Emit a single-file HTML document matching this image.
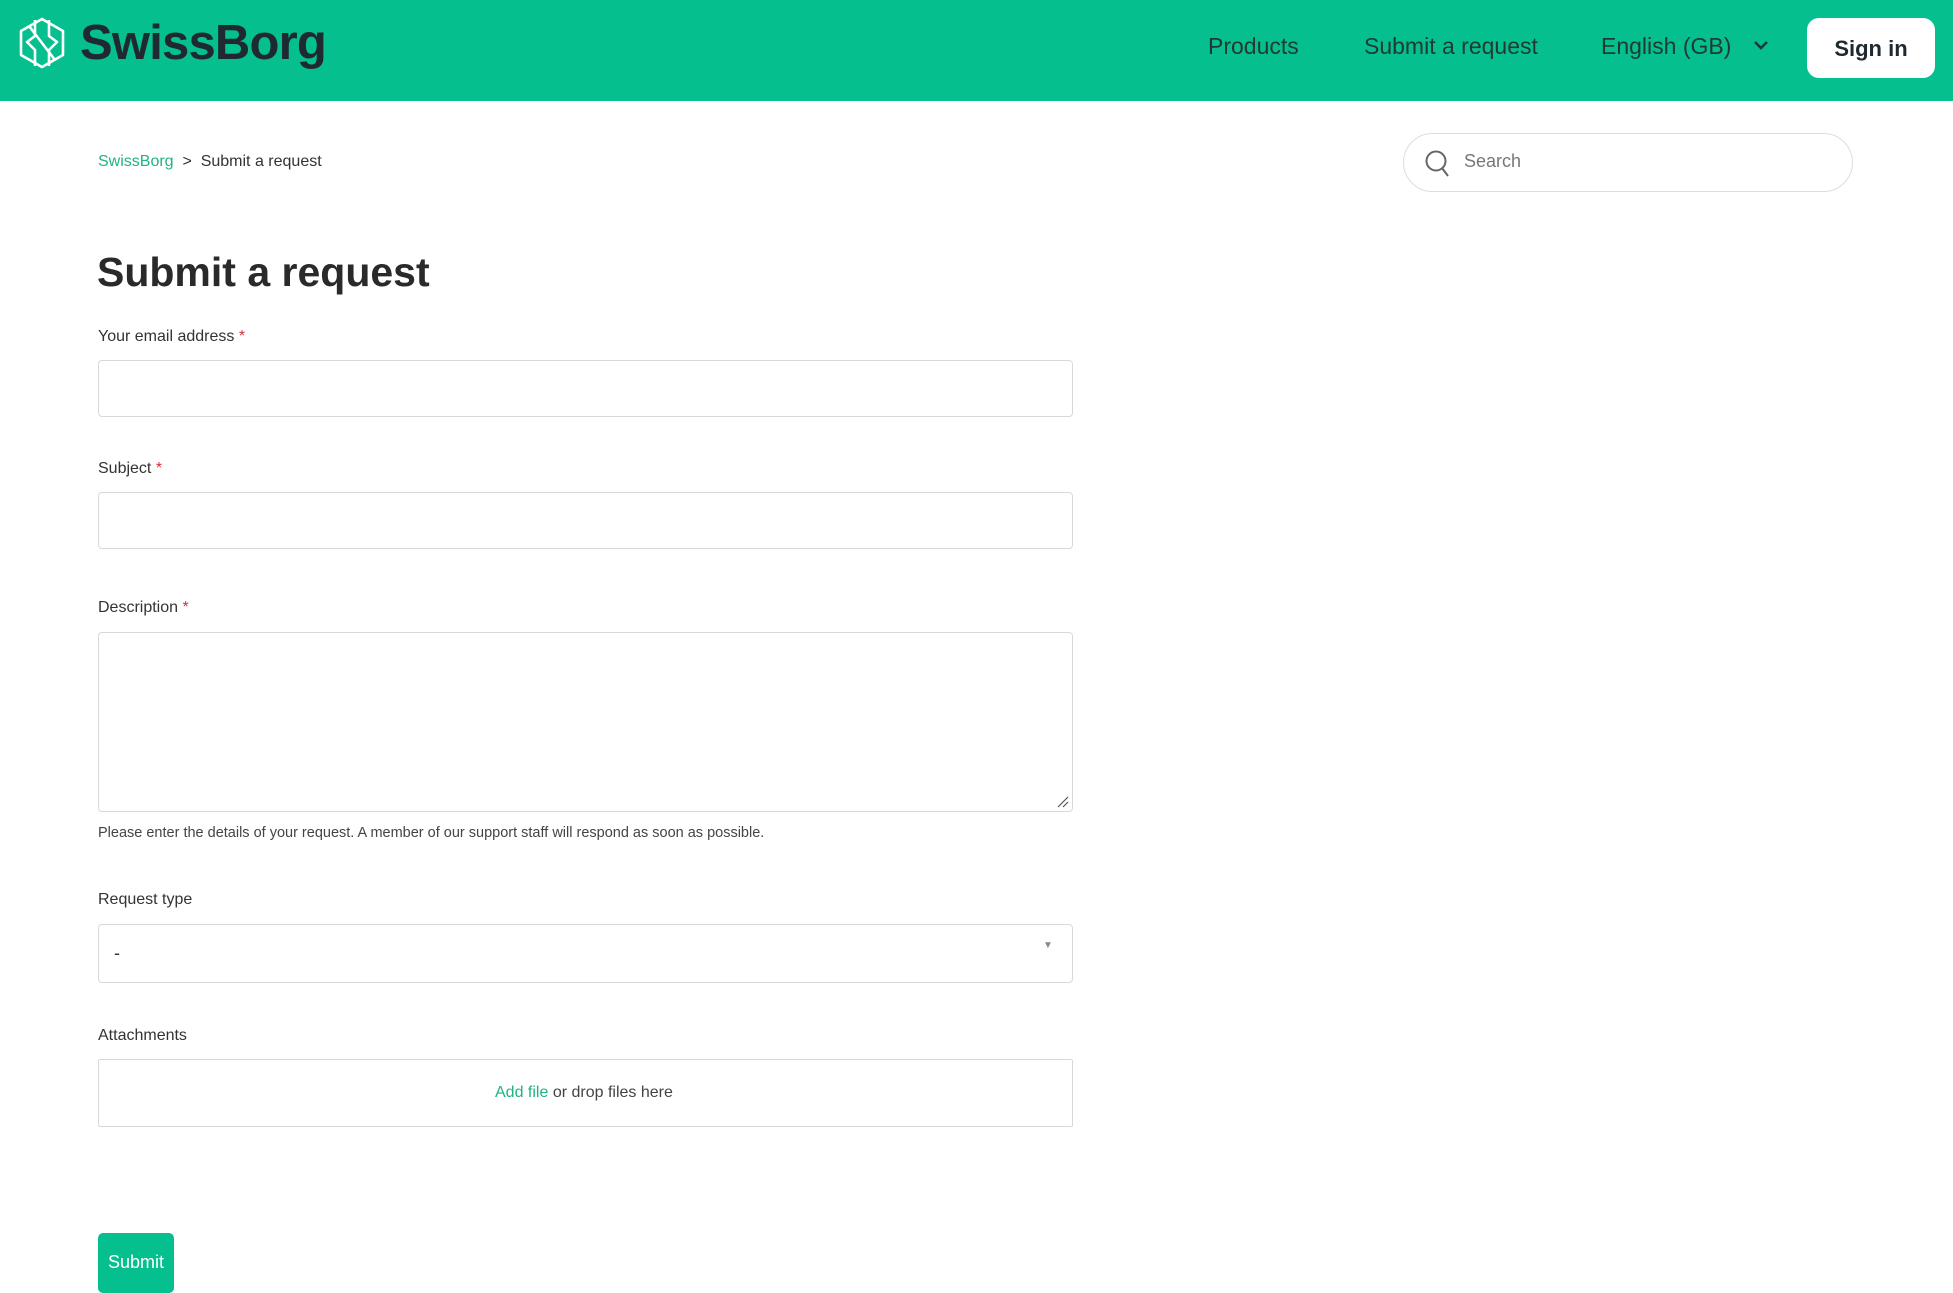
<!DOCTYPE html>
<html><head><meta charset="utf-8"><style>
*{box-sizing:border-box;margin:0;padding:0}
body{width:1953px;height:1281px;overflow:hidden;background:#fff;font-family:"Liberation Sans",sans-serif;color:#2b2b2b;position:relative}
.hdr{position:absolute;left:0;top:0;width:1953px;height:101px;background:#05bf8e}
.abs{position:absolute;white-space:nowrap}
.nav{font-size:23px;color:#1f3a34;top:33px}
.lbl{position:absolute;left:98px;font-size:16px;color:#333}
.lbl b{color:#d0303f;font-weight:normal}
.inp{position:absolute;left:98px;width:975px;border:1px solid #d8d8d8;border-radius:4px;background:#fff}
</style></head><body>
<div class="hdr"></div>
<svg class="abs" style="left:15px;top:16px" width="54" height="54" viewBox="0 0 54 54" fill="none" stroke="#fff" stroke-width="2.6" stroke-linejoin="round">
<path d="M27 3 L48 15 L48 39 L27 51 L6 39 L6 15 Z"/>
<path d="M20 4 L20 20 L12 26 L20 34 L20 50"/>
<path d="M34 4 L34 20 L42 26 L34 34 L34 50"/>
<path d="M14 10 L40 44"/>
</svg>
<div class="abs" style="left:80px;top:15px;font-size:49px;font-weight:bold;color:#1f2a30;letter-spacing:-0.8px">SwissBorg</div>
<div class="abs nav" style="left:1208px">Products</div>
<div class="abs nav" style="left:1364px">Submit a request</div>
<div class="abs nav" style="left:1601px">English (GB)</div>
<svg class="abs" style="left:1752px;top:39px" width="18" height="12" viewBox="0 0 18 12"><path d="M3 3 L9 9 L15 3" stroke="#1f3a34" stroke-width="2.6" fill="none"/></svg>
<div class="abs" style="left:1807px;top:18px;width:128px;height:60px;background:#fff;border-radius:12px;font-size:22px;font-weight:bold;color:#1f2a30;text-align:center;line-height:62px">Sign in</div>

<div class="abs" style="left:98px;top:153px;font-size:16px;color:#333"><span style="color:#1fb385">SwissBorg</span>&nbsp;&nbsp;&gt;&nbsp;&nbsp;Submit a request</div>
<div class="abs" style="left:1403px;top:133px;width:450px;height:59px;border:1px solid #ddd;border-radius:30px"></div>
<svg class="abs" style="left:1424px;top:149px" width="28" height="30" viewBox="0 0 28 30"><circle cx="12" cy="12" r="9.5" stroke="#666" stroke-width="2" fill="none"/><path d="M18 19 L24 27" stroke="#666" stroke-width="2"/></svg>
<div class="abs" style="left:1464px;top:151px;font-size:18px;color:#777">Search</div>

<div class="abs" style="left:97px;top:249px;font-size:41px;font-weight:bold;color:#2a2a2a">Submit a request</div>
<div class="lbl" style="top:328px">Your email address<b> *</b></div>
<div class="inp" style="top:360px;height:57px"></div>
<div class="lbl" style="top:460px">Subject<b> *</b></div>
<div class="inp" style="top:492px;height:57px"></div>
<div class="lbl" style="top:599px">Description<b> *</b></div>
<div class="inp" style="top:632px;height:180px"></div>
<svg class="abs" style="left:1056px;top:795px" width="14" height="14"><path d="M2 12 L12 2 M7 12 L12 7" stroke="#555" stroke-width="1.2"/></svg>
<div class="abs" style="left:98px;top:825px;font-size:14.5px;color:#444">Please enter the details of your request. A member of our support staff will respond as soon as possible.</div>
<div class="lbl" style="top:891px">Request type</div>
<div class="inp" style="top:924px;height:59px"></div>
<div class="abs" style="left:114px;top:943px;font-size:18px;color:#333">-</div>
<div class="abs" style="left:1043px;top:940px;font-size:10px;color:#888">▼</div>
<div class="lbl" style="top:1027px">Attachments</div>
<div class="inp" style="top:1059px;height:68px;border-radius:2px"></div>
<div class="abs" style="left:495px;top:1084px;font-size:16px;color:#444"><span style="color:#1fb385">Add file</span> or drop files here</div>
<div class="abs" style="left:98px;top:1233px;width:76px;height:60px;background:#05bf8e;border-radius:5px;color:#fff;font-size:18px;text-align:center;padding-top:19px">Submit</div>
</body></html>
